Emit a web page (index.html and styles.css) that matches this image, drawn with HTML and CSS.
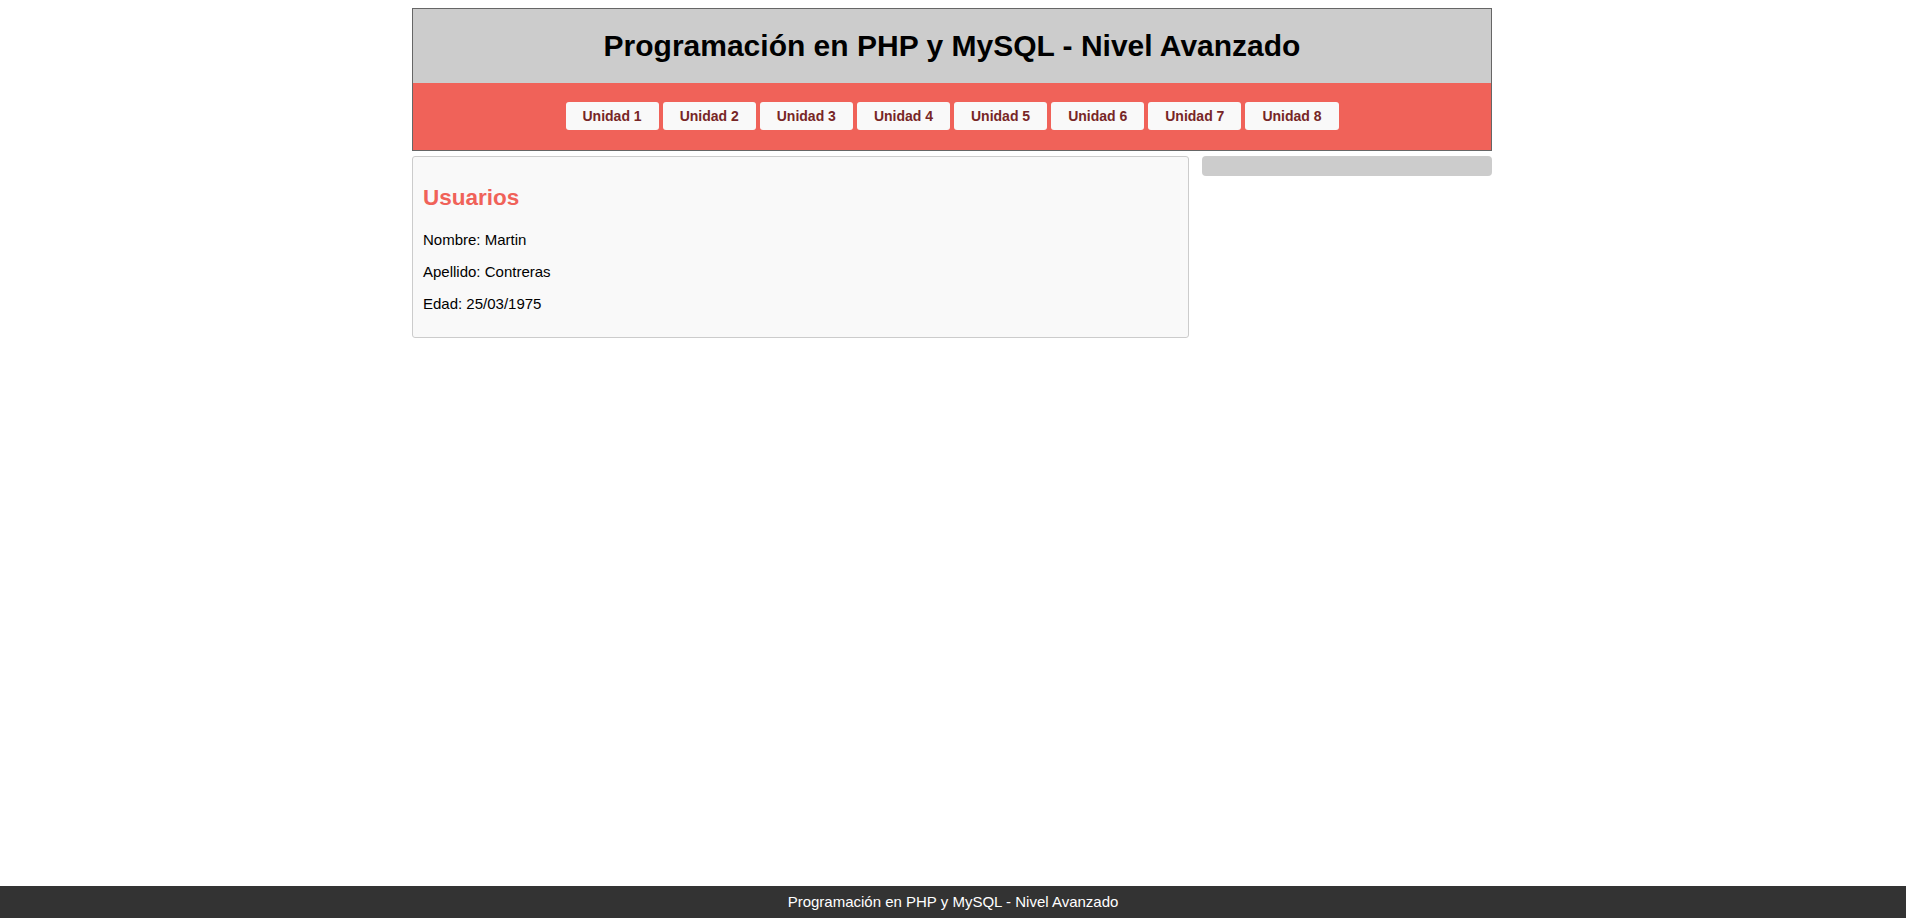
FILE: index.html
```html
<!DOCTYPE html>
<html lang="es">
<head>
<meta charset="utf-8">
<title>Programación en PHP y MySQL - Nivel Avanzado</title>
<link rel="stylesheet" href="styles.css">
</head>
<body>
<div class="container">
  <header class="header">
    <h1 class="title">Programación en PHP y MySQL - Nivel Avanzado</h1>
    <nav class="nav">
      <a class="nav-btn" href="#">Unidad 1</a>
      <a class="nav-btn" href="#">Unidad 2</a>
      <a class="nav-btn" href="#">Unidad 3</a>
      <a class="nav-btn" href="#">Unidad 4</a>
      <a class="nav-btn" href="#">Unidad 5</a>
      <a class="nav-btn" href="#">Unidad 6</a>
      <a class="nav-btn" href="#">Unidad 7</a>
      <a class="nav-btn" href="#">Unidad 8</a>
    </nav>
  </header>
  <div class="columns">
    <section class="main">
      <h2 class="main-title">Usuarios</h2>
      <p class="field">Nombre: Martin</p>
      <p class="field">Apellido: Contreras</p>
      <p class="field">Edad: 25/03/1975</p>
    </section>
    <aside class="sidebar"></aside>
  </div>
</div>
<footer class="footer">Programación en PHP y MySQL - Nivel Avanzado</footer>
</body>
</html>
```
FILE: styles.css
```css
html, body {
  margin: 0;
  padding: 0;
}
body {
  margin: 8px;
  font-family: "Liberation Sans", Arial, sans-serif;
  font-size: 15px;
  color: #000;
  background: #fff;
}
.container {
  box-sizing: border-box;
  width: 1082px;
  padding-right: 2px;
  margin: 0 auto;
}
.header {
  border: 1px solid #666;
  background: #cccccc;
}
.title {
  margin: 0;
  padding: 20px 0 20px;
  font-size: 30px;
  font-weight: bold;
  line-height: 34px;
  text-align: center;
}
.nav {
  background: #f06259;
  display: flex;
  justify-content: center;
  gap: 4px;
  padding: 19px 0 20px;
}
.nav-btn {
  display: block;
  background: #f9f9f9;
  color: #772626;
  font-size: 14px;
  font-weight: bold;
  line-height: 16px;
  padding: 6px 17px;
  border-radius: 3px;
  text-decoration: none;
}
.columns {
  display: flex;
  justify-content: space-between;
  align-items: flex-start;
  margin-top: 5px;
}
.main {
  box-sizing: border-box;
  width: 777px;
  background: #f9f9f9;
  border: 1px solid #cccccc;
  border-radius: 3px;
  padding: 10px 9px 10px 10px;
}
.main-title {
  color: #f06259;
  font-size: 22.5px;
  font-weight: bold;
  margin: 18px 0 20px;
}
.field {
  margin: 15px 0;
  line-height: 17px;
}
.sidebar {
  width: 290px;
  height: 20px;
  background: #cccccc;
  border-radius: 4px;
}
.footer {
  position: fixed;
  left: 0;
  right: 0;
  bottom: 0;
  height: 32px;
  background: #333333;
  color: #fff;
  font-size: 15px;
  line-height: 32px;
  text-align: center;
}
```
